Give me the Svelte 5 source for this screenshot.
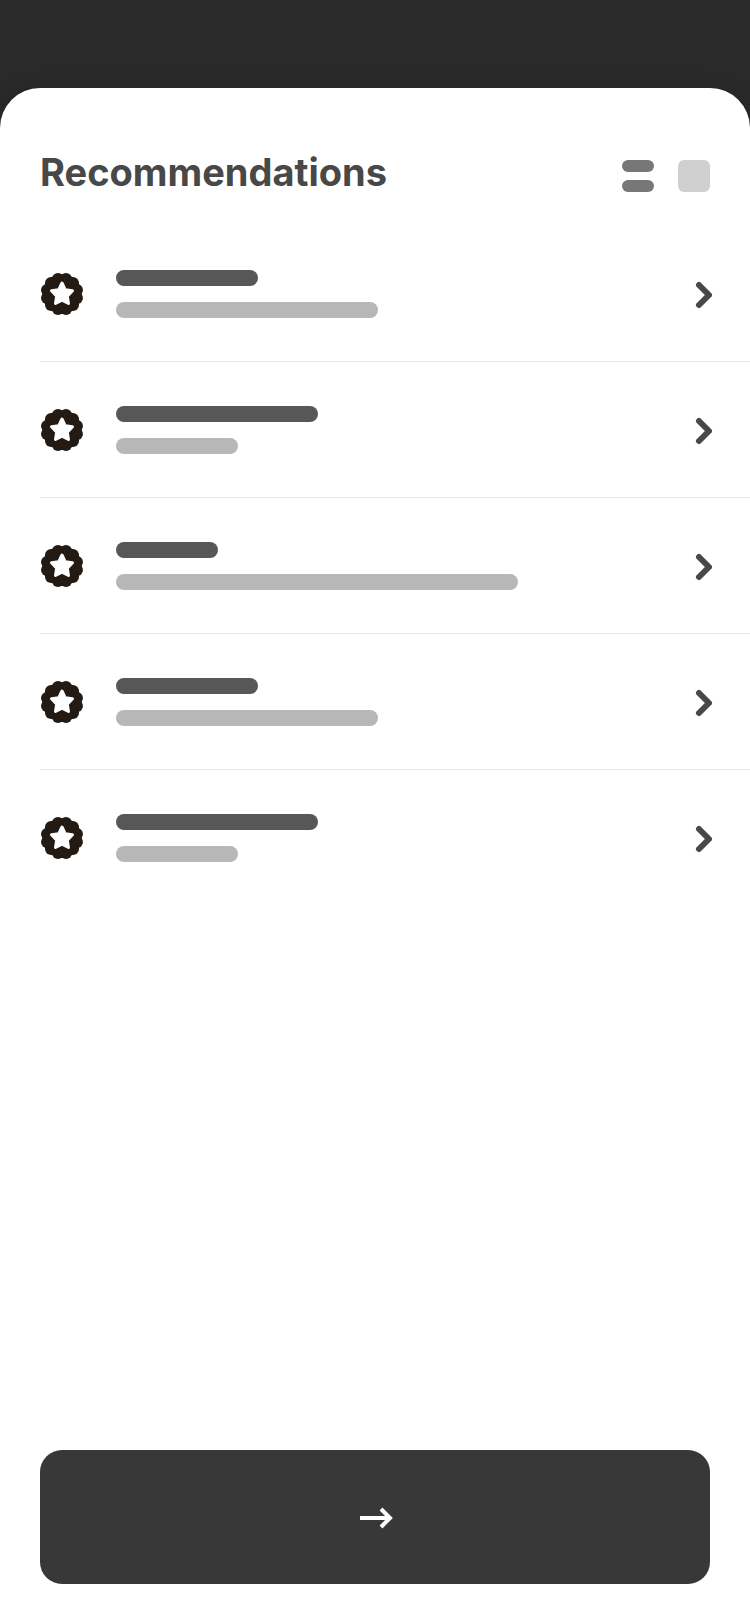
<script lang="ts">
	interface Item {
		title: number;
		subtitle: number;
	}

	const items: Item[] = [
		{ title: 142, subtitle: 262 },
		{ title: 202, subtitle: 122 },
		{ title: 102, subtitle: 402 },
		{ title: 142, subtitle: 262 },
		{ title: 202, subtitle: 122 }
	];

	// centres of the twelve lobes round the badge
	const lobes = Array.from({ length: 12 }, (_, i) => {
		const angle = ((i * 30 + 15) * Math.PI) / 180;
		return { x: 22 + 15.4 * Math.cos(angle), y: 22 + 15.4 * Math.sin(angle) };
	});

	let view = $state<'list' | 'grid'>('list');
</script>

<main class="sheet">
	<header class="header">
		<h1>Recommendations</h1>
		<div class="views">
			<button
				class="view"
				class:active={view === 'list'}
				type="button"
				aria-label="List view"
				aria-pressed={view === 'list'}
				onclick={() => (view = 'list')}
			>
				<span></span>
				<span></span>
			</button>
			<button
				class="view"
				class:active={view === 'grid'}
				type="button"
				aria-label="Card view"
				aria-pressed={view === 'grid'}
				onclick={() => (view = 'grid')}
			>
				<span></span>
			</button>
		</div>
	</header>

	<ul class="list">
		{#each items as item, i}
			<li>
				<a class="row" href="#item-{i + 1}" aria-label="Recommendation {i + 1}">
					<svg class="badge" width="44" height="44" viewBox="0 0 44 44" aria-hidden="true">
						<circle cx="22" cy="22" r="19.8" />
						{#each lobes as lobe}
							<circle cx={lobe.x} cy={lobe.y} r="6.1" />
						{/each}
						<path
							class="star"
							d="M22 11L25.3 17.8L32.5 18.8L27.3 24.1L28.5 31.4L22 28.1L15.5 31.4L16.7 24.1L11.5 18.8L18.7 17.8Z"
						/>
					</svg>
					<span class="lines">
						<span class="line line-title" style="width: {item.title}px"></span>
						<span class="line line-subtitle" style="width: {item.subtitle}px"></span>
					</span>
					<svg class="chevron" width="20" height="32" viewBox="0 0 20 32" aria-hidden="true">
						<path d="M5 7L15 17L5 27" />
					</svg>
				</a>
			</li>
		{/each}
	</ul>

	<footer class="footer">
		<button class="next" type="button" aria-label="Continue">
			<svg width="36" height="28" viewBox="0 0 36 28" aria-hidden="true">
				<path d="M3 15H33M24 6L33 15L24 24" />
			</svg>
		</button>
	</footer>
</main>

<style>
	:global(body) {
		margin: 0;
		padding-top: 88px;
		background: #2a2a2a;
		font-family: Inter, 'Liberation Sans', sans-serif;
	}

	.sheet {
		display: flex;
		flex-direction: column;
		box-sizing: border-box;
		min-height: calc(100vh - 88px);
		padding-bottom: 40px;
		background: #fff;
		border-radius: 40px 40px 0 0;
		box-shadow: 0 0 20px rgba(0, 0, 0, .15);
	}

	.header {
		display: flex;
		align-items: flex-end;
		justify-content: space-between;
		padding: 64px 40px 34px;
	}

	h1 {
		margin: 0;
		color: #484848;
		font-size: 38px;
		font-weight: 700;
		line-height: 40px;
	}

	.views {
		display: flex;
		gap: 24px;
	}

	.view {
		display: flex;
		flex-direction: column;
		gap: 8px;
		width: 32px;
		height: 32px;
		padding: 0;
		border: none;
		background: none;
		color: #d0d0d0;
		cursor: pointer;
	}
	.view.active {
		color: #777;
	}

	.view span {
		flex: 1;
		width: 100%;
		border-radius: 6px;
		background: currentColor;
	}

	.list {
		margin: 0;
		padding: 0 0 0 40px;
		list-style: none;
	}

	li {
		border-bottom: 1px solid #e6e6e6;
	}
	li:last-child {
		border-bottom: none;
	}

	.row {
		display: flex;
		align-items: center;
		gap: 32px;
		padding: 44px 36px 43px 0;
	}

	.badge {
		flex: none;
		fill: #231a14;
	}

	.star {
		fill: #fff;
		stroke: #fff;
		stroke-width: 3;
		stroke-linejoin: round;
	}

	.lines {
		display: flex;
		flex: 1;
		flex-direction: column;
		gap: 16px;
		min-width: 0;
	}

	.line {
		height: 16px;
		max-width: 100%;
		border-radius: 8px;
	}

	.line-title {
		background: #575757;
	}

	.line-subtitle {
		background: #b7b7b7;
	}

	.chevron {
		flex: none;
		fill: none;
		stroke: #484848;
		stroke-width: 6;
		stroke-linecap: round;
		stroke-linejoin: round;
	}

	.footer {
		margin-top: auto;
		padding: 40px 40px 0;
	}

	.next {
		display: flex;
		align-items: center;
		justify-content: center;
		width: 100%;
		height: 134px;
		padding: 0;
		border: none;
		border-radius: 22px;
		background: #383838;
		cursor: pointer;
	}

	.next svg {
		fill: none;
		stroke: #fff;
		stroke-width: 4;
	}
</style>
